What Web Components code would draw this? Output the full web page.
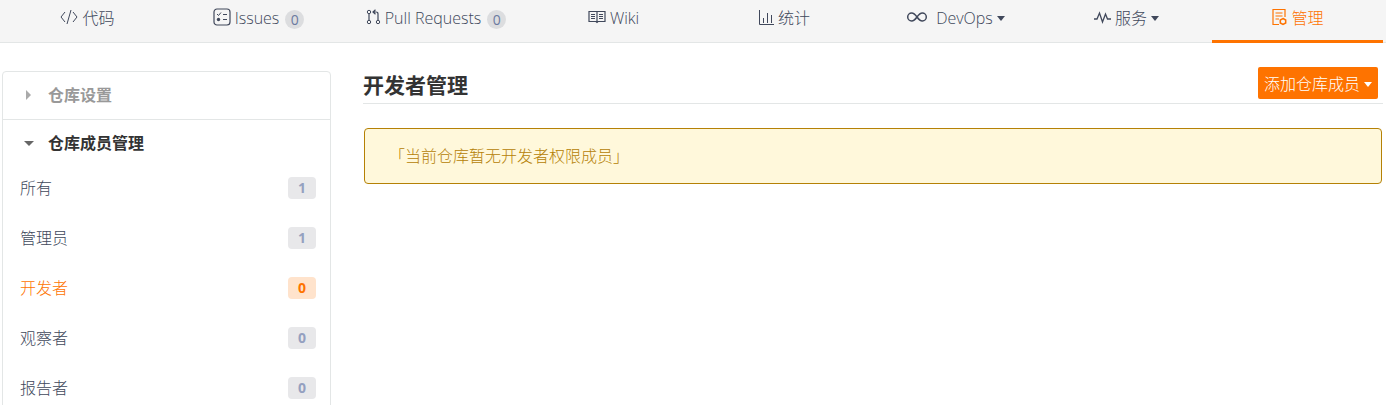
<!DOCTYPE html>
<html lang="zh-CN">
<head>
  <meta charset="utf-8">
  <meta name="viewport" content="width=device-width, initial-scale=1">
  <title>开发者管理</title>
  <style>
    body {
      margin: 0;
      background: #fff;
      color: #40485b;
      font: 300 16px/24px "Open Sans", "Noto Sans CJK SC", sans-serif;
      --accent: #fe7300;
      --line: #e3e6e6;
    }
  </style>
</head>
<body>
  <repo-tabs>
    <repo-tab icon="code">代码</repo-tab>
    <repo-tab icon="issues" count="0">Issues</repo-tab>
    <repo-tab icon="pull" count="0" wide>Pull Requests</repo-tab>
    <repo-tab icon="wiki">Wiki</repo-tab>
    <repo-tab icon="chart">统计</repo-tab>
    <repo-tab icon="infinity" menu>DevOps</repo-tab>
    <repo-tab icon="pulse" menu>服务</repo-tab>
    <repo-tab icon="manage" active>管理</repo-tab>
  </repo-tabs>

  <settings-layout>
    <side-menu slot="side">
      <side-group label="仓库设置"></side-group>
      <side-group label="仓库成员管理" open>
        <side-item count="1">所有</side-item>
        <side-item count="1">管理员</side-item>
        <side-item count="0" active>开发者</side-item>
        <side-item count="0">观察者</side-item>
        <side-item count="0">报告者</side-item>
      </side-group>
    </side-menu>
    <page-header>
      开发者管理
      <menu-button slot="action">添加仓库成员</menu-button>
    </page-header>
    <notice-box>「当前仓库暂无开发者权限成员」</notice-box>
  </settings-layout>

  <script>
    const svg = (w, h, body) =>
      `<svg width="${w}" height="${h}" viewBox="0 0 ${w} ${h}" fill="none" stroke="currentColor" aria-hidden="true">${body}</svg>`;

    const ICONS = {
      code: svg(18, 16, '<path d="M5 3 1 8l4 5M13 3l4 5-4 5M11 1 7 15"/>'),
      issues: svg(18, 18, `<rect x="1" y="1" width="16" height="16" rx="3" stroke-width="1.2"/>
        <path d="m4 6 1.5 1.5L8 4.5M10 6.5h4M10 11.5h4"/><circle cx="5.5" cy="11.5" r="1.7" fill="currentColor" stroke="none"/>`),
      pull: svg(15, 16, `<circle cx="3" cy="3" r="1.7"/><circle cx="3" cy="13" r="1.7"/><circle cx="12" cy="13" r="1.7"/>
        <path d="M3 5v6.3M12 11V5q0-2-2-2H7.5M9.5.8 7 3l2.5 2.2" stroke-width="1.2"/>`),
      wiki: svg(18, 14, `<path d="M1 1.500h16v10h-7l-1 1-1-1H1zM9 2v10" stroke-width="1.2"/>
        <path d="M3 4.5h4M3 6.5h4M3 8.5h4M11 4.5h4M11 6.5h4M11 8.5h4"/>`),
      chart: svg(15, 15, '<path d="M.5 0v14.500H15M4.5 13V8M8.5 13V3M12.5 13V5"/>'),
      infinity: svg(22, 12, '<path d="M11 6C9 3.2 7.7 2 5.7 2a4 4 0 0 0 0 8C7.7 10 9 8.8 11 6s3.300-4 5.300-4a4 4 0 0 1 0 8C14.300 10 13 8.800 11 6z" stroke-width="1.5"/>'),
      pulse: svg(17, 14, '<path d="M0 9h3l2.500-6 3 9 3-8 2 5H17" stroke-width="1.3"/>'),
      manage: svg(16, 18, `<path d="M14 9V1.500H2v15h6M4.500 5h7M4.500 8h7M4.500 11H8" stroke-width="1.2"/>
        <path d="m12 10.500 2.700 1.500v3L12 16.500 9.300 15v-3z" stroke-width="1.5"/>`)
    };

    const caret = '<span class="caret"></span>';
    const caretStyle = `
      .caret {
        border: 4px solid transparent;
        border-top: 5px solid currentColor;
        border-bottom: 0;
      }`;

    class BaseElement extends HTMLElement {
      connectedCallback() {
        if (this.shadowRoot) return;
        this.attachShadow({ mode: "open" }).innerHTML = this.render();
      }
    }

    class RepoTabs extends BaseElement {
      render() {
        return `
          <style>
            :host {
              display: block;
              background: #f5f5f5;
              box-shadow: inset 0 -1px var(--line);
            }
            nav { display: flex; padding: 0 3px 0 2px; }
          </style>
          <nav><slot></slot></nav>`;
      }
    }

    class RepoTab extends BaseElement {
      render() {
        const menu = this.hasAttribute("menu");
        const count = this.getAttribute("count");
        const inner = `
          ${ICONS[this.getAttribute("icon")]}
          <span><slot></slot></span>
          ${count === null ? "" : `<span class="count">${count}</span>`}
          ${menu ? caret : ""}`;
        return `
          <style>
            :host { display: block; flex: 1 1 0px; }
            :host([wide]) { flex-basis: 13px; }
            a, button {
              display: flex;
              width: 100%;
              height: 43px;
              box-sizing: border-box;
              padding: 0 0 4px;
              border: 0;
              border-bottom: 3px solid transparent;
              align-items: center;
              justify-content: center;
              gap: 4px;
              background: none;
              color: inherit;
              font: inherit;
              text-decoration: none;
              white-space: nowrap;
              cursor: pointer;
            }
            :host([active]) a { color: var(--accent); border-color: var(--accent); }
            svg { margin-bottom: 2px; }
            :host([icon="infinity"]) svg { margin-right: 4px; }
            .count {
              min-width: 19px;
              margin-top: 2px;
              margin-left: 2px;
              border-radius: 10px;
              background: #dcdddf;
              color: #6b7aa0;
              font-size: 14px;
              font-weight: 400;
              line-height: 19px;
              text-align: center;
            }
            ${caretStyle}
          </style>
          ${menu
            ? `<button type="button" aria-haspopup="true">${inner}</button>`
            : `<a href="#">${inner}</a>`}`;
      }
    }

    class SettingsLayout extends BaseElement {
      render() {
        return `
          <style>
            :host {
              display: grid;
              grid-template-columns: 329px minmax(0, 1fr);
              gap: 32px;
              padding: 24px 3px 0 2px;
            }
            aside { padding-top: 4px; }
          </style>
          <aside><slot name="side"></slot></aside>
          <main><slot></slot></main>`;
      }
    }

    class SideMenu extends BaseElement {
      render() {
        return `
          <style>
            :host {
              display: block;
              border: 1px solid var(--line);
              border-radius: 4px;
            }
          </style>
          <slot></slot>`;
      }
    }

    class SideGroup extends BaseElement {
      render() {
        const open = this.hasAttribute("open");
        return `
          <style>
            :host { display: block; }
            :host(:not(:first-child)) { border-top: 1px solid var(--line); }
            button {
              display: flex;
              width: 100%;
              padding: 11px 20px 12px;
              border: 0;
              align-items: center;
              background: none;
              color: #999;
              font: inherit;
              font-weight: 700;
              cursor: pointer;
            }
            :host([open]) button { padding-bottom: 8px; color: #333; }
            .arrow { display: flex; width: 25px; }
            .arrow::before {
              content: "";
              margin-left: 3px;
              border: 5px solid transparent;
              border-left-color: #aaa;
              border-right: 0;
            }
            :host([open]) .arrow::before {
              margin-left: 1px;
              border: 5px solid transparent;
              border-top-color: #666;
              border-bottom: 0;
            }
          </style>
          <button type="button" aria-expanded="${open}">
            <span class="arrow"></span>${this.getAttribute("label")}
          </button>
          <slot></slot>`;
      }
    }

    class SideItem extends BaseElement {
      render() {
        return `
          <style>
            :host { display: block; }
            a {
              display: flex;
              padding: 13px 14px 13px 17px;
              align-items: center;
              justify-content: space-between;
              color: inherit;
              text-decoration: none;
            }
            .count {
              width: 28px;
              border-radius: 4px;
              background: #e8e8ea;
              color: #94a0c0;
              font-size: 14px;
              font-weight: 700;
              line-height: 22px;
              text-align: center;
            }
            :host([active]) a { color: var(--accent); }
            :host([active]) .count { background: #ffe3cc; color: var(--accent); }
          </style>
          <a href="#"><span><slot></slot></span><span class="count">${this.getAttribute("count")}</span></a>`;
      }
    }

    class PageHeader extends BaseElement {
      render() {
        return `
          <style>
            :host {
              display: flex;
              padding: 0 5px 4px 0;
              border-bottom: 1px solid var(--line);
              align-items: flex-end;
              justify-content: space-between;
            }
            h1 {
              margin: 0;
              color: #333;
              font-size: 21px;
              font-weight: 700;
              line-height: 28px;
            }
          </style>
          <h1><slot></slot></h1>
          <slot name="action"></slot>`;
      }
    }

    class MenuButton extends BaseElement {
      render() {
        return `
          <style>
            :host { display: block; }
            button {
              display: flex;
              padding: 5px 6px 3px;
              border: 0;
              border-radius: 2px;
              align-items: center;
              gap: 4px;
              background: var(--accent);
              color: #fff;
              font: inherit;
              white-space: nowrap;
              cursor: pointer;
            }
            ${caretStyle}
          </style>
          <button type="button" aria-haspopup="true"><slot></slot>${caret}</button>`;
      }
    }

    class NoticeBox extends BaseElement {
      render() {
        return `
          <style>
            :host {
              display: block;
              margin: 24px 1px 0;
              padding: 15px 24px;
              border: 1px solid #b58105;
              border-radius: 4px;
              background: #fff8db;
              color: #b58105;
            }
          </style>
          <slot></slot>`;
      }
    }

    customElements.define("repo-tabs", RepoTabs);
    customElements.define("repo-tab", RepoTab);
    customElements.define("settings-layout", SettingsLayout);
    customElements.define("side-menu", SideMenu);
    customElements.define("side-group", SideGroup);
    customElements.define("side-item", SideItem);
    customElements.define("page-header", PageHeader);
    customElements.define("menu-button", MenuButton);
    customElements.define("notice-box", NoticeBox);
  </script>
</body>
</html>
